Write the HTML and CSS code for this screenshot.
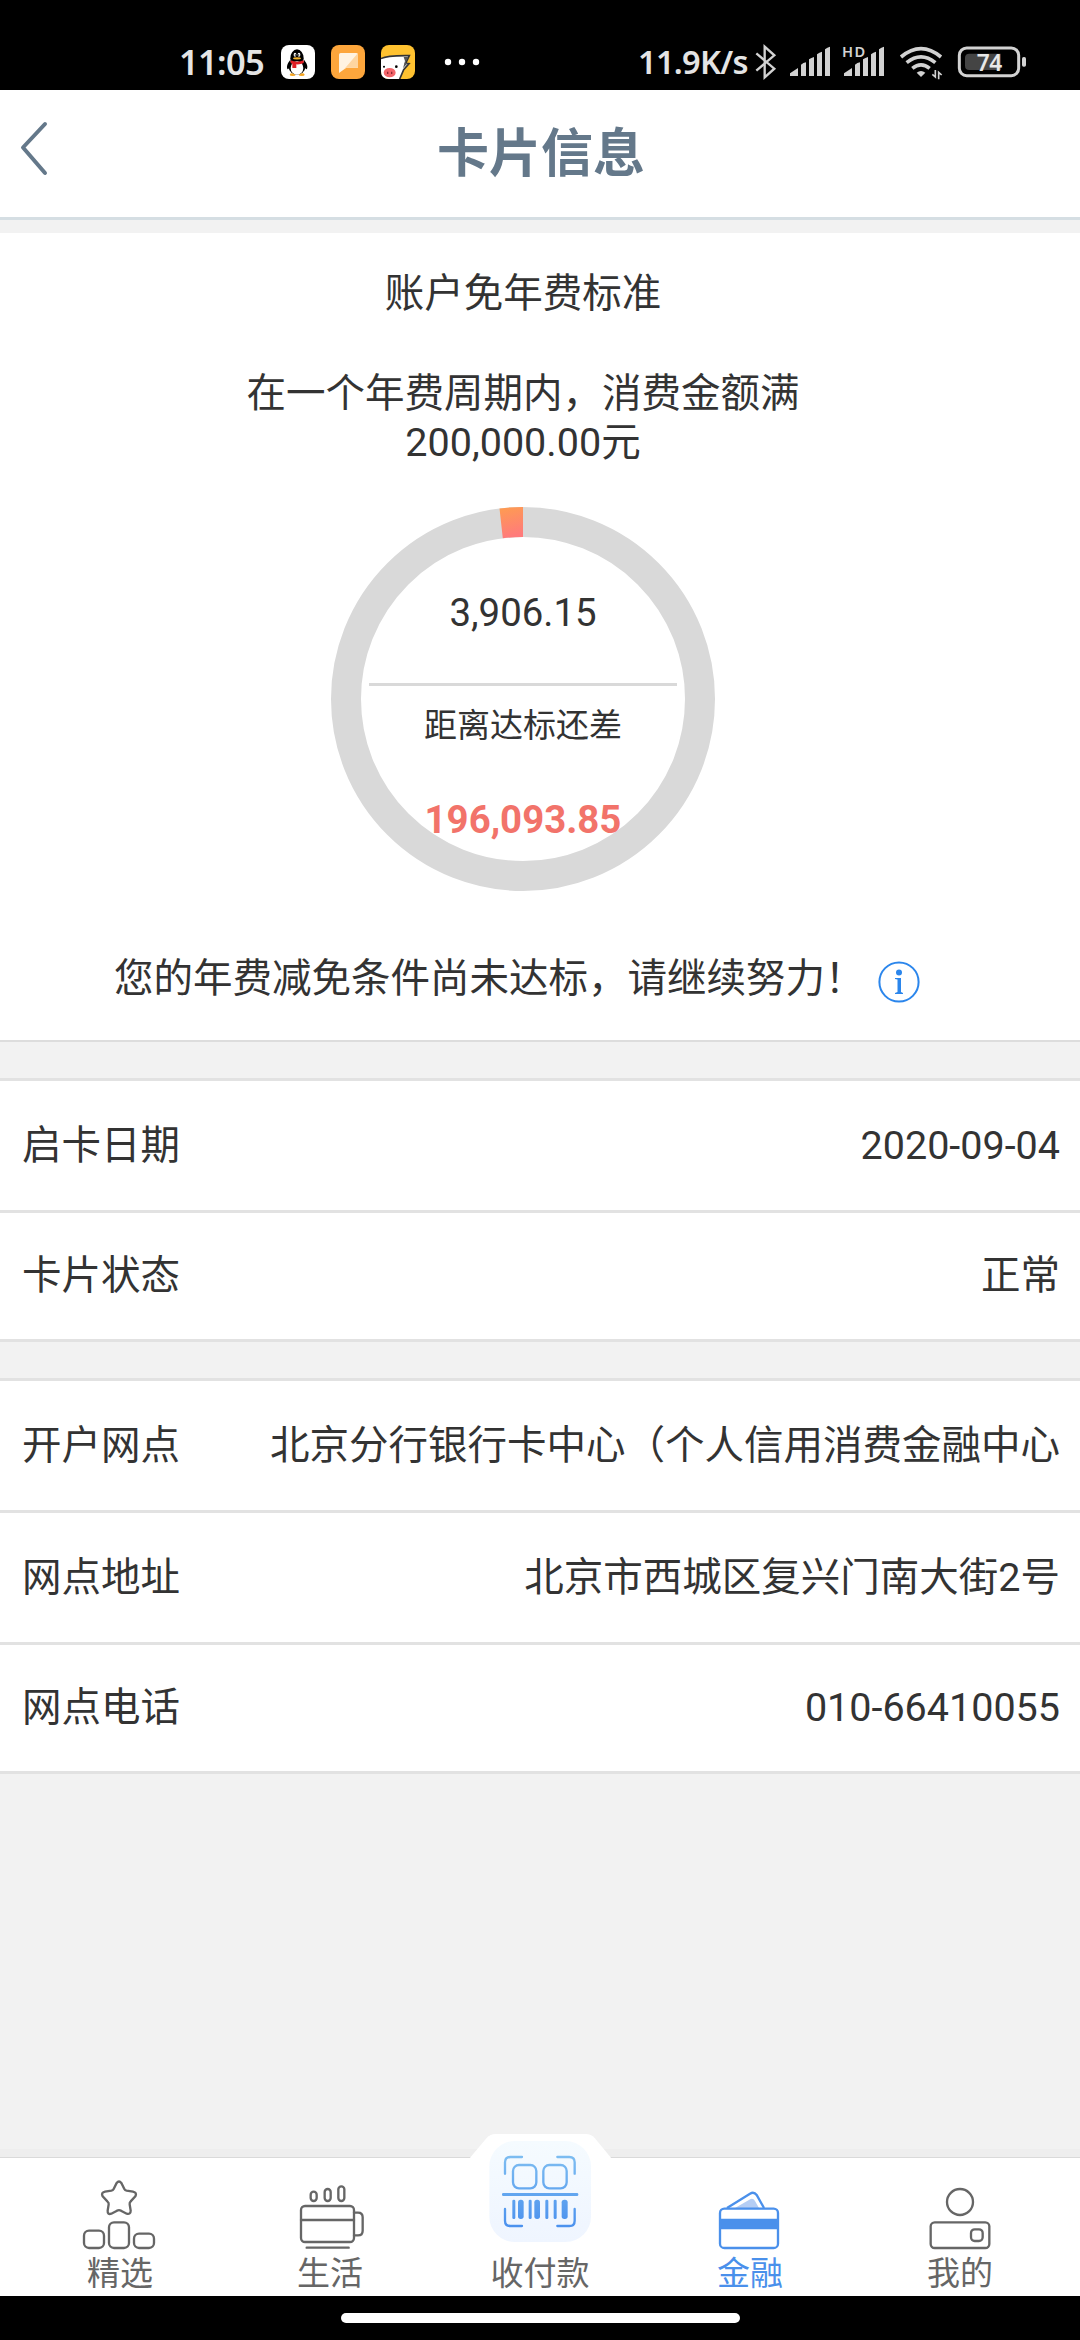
FILE: index.html
```html
<!DOCTYPE html>
<html lang="zh-CN">
<head>
<meta charset="utf-8">
<title>卡片信息</title>
<link rel="stylesheet" href="styles.css">
</head>
<body>
<div class="phone">
  <div class="status">
    <span class="clock">11:05</span>
    <div class="notices">
      <svg width="34" height="34" viewBox="0 0 102 102">
        <rect width="102" height="102" rx="24" fill="#fff"/>
        <ellipse cx="35" cy="89" rx="9" ry="4" fill="#f5a623"/><ellipse cx="62" cy="89" rx="9" ry="4" fill="#f5a623"/>
        <path d="M28 44Q14 62 19 72Q22 74 28 66ZM69 44Q83 62 78 72Q75 74 69 66Z" fill="#000"/>
        <ellipse cx="48" cy="65" rx="25" ry="24" fill="#000"/>
        <ellipse cx="48" cy="40" rx="20" ry="27" fill="#000"/>
        <ellipse cx="48" cy="69" rx="19" ry="20" fill="#fff"/>
        <ellipse cx="42" cy="29" rx="4" ry="6" fill="#fff"/><ellipse cx="54" cy="29" rx="4" ry="6" fill="#fff"/>
        <circle cx="43" cy="30" r="2"/><circle cx="53" cy="30" r="2"/>
        <ellipse cx="48" cy="40" rx="12" ry="3.5" fill="#f7b52c"/>
        <path d="M29 46Q48 54 68 46V54Q58 59 46 58V69H34V56L29 54Z" fill="#e01f26"/>
      </svg>
      <svg width="34" height="34" viewBox="0 0 102 102">
        <rect width="102" height="102" rx="24" fill="#fda63c"/>
        <path d="M29 24H76Q81 24 81 29V68H46L24 84V29Q24 24 29 24Z" fill="#fff3e2"/>
        <path d="M81 24V68H46L40 72Z" fill="#fed5a0"/>
      </svg>
      <svg width="34" height="34" viewBox="0 0 102 102">
        <rect width="102" height="102" rx="24" fill="#ffc230"/>
        <path d="M0 41Q16 29 85 32L75 56L84 55L70 72L56 102H24Q0 102 0 78Z" fill="#fff"/>
        <path d="M0 41Q16 31 85 32L74 55L84 56L68 74L56 102" fill="none" stroke="#333" stroke-width="5"/>
        <path d="M68 36H82L72 54H80L66 70L72 48Z" fill="#555"/>
        <ellipse cx="26" cy="83" rx="18" ry="14" fill="#f3656a"/>
        <path d="M20 80V87M32 80V87" stroke="#8a2931" stroke-width="4"/>
        <circle cx="9" cy="65" r="3"/><circle cx="46" cy="65" r="4"/>
      </svg>
    </div>
    <svg class="dots" width="36" height="8" viewBox="0 0 36 8" fill="#fff"><circle cx="4" cy="4" r="3.2"/><circle cx="18" cy="4" r="3.2"/><circle cx="32" cy="4" r="3.2"/></svg>
    <span class="speed">11.9K/s</span>
    <svg class="bt" width="25" height="40" viewBox="399 36 75 120"><path d="M409 70L463 116L434 142V50L463 76L409 122" fill="none" stroke="#d2d2d2" stroke-width="7"/></svg>
    <svg class="sig" width="43" height="40" viewBox="507 36 129 120" fill="#d2d2d2"><path d="M510 138V130L534 114V138ZM543 138V104Q550 98 558 97V138ZM567 138V88Q574 83 582 81V138ZM591 138V73Q598 67 606 65V138ZM615 138V58Q622 52 630 50V138Z"/></svg>
    <svg class="sig2" width="44" height="40" viewBox="666 36 132 120" fill="#d2d2d2"><path d="M672 138V130L696 114V138ZM705 138V104Q712 98 720 97V138ZM729 138V88Q736 83 744 81V138ZM753 138V73Q760 67 768 65V138ZM777 138V58Q784 52 792 50V138Z"/><text x="666" y="81" class="hd" textLength="70">HD</text></svg>
    <svg class="wifi" width="45" height="40" viewBox="837 36 135 120" fill="none" stroke="#d2d2d2" stroke-width="11"><path d="M843 81Q903 31 963 81M860 98Q903 63 946 98M877 115Q903 94 929 115"/><path d="M890 128Q903 118 916 128L903 141Z" fill="#d2d2d2" stroke="none"/><path d="M946 120V141L937 133M956 148V127L965 135" stroke-width="5"/></svg>
    <svg class="batt" width="70" height="40" viewBox="1011 36 210 120"><rect x="1018" y="54" width="178" height="83" rx="22" fill="none" stroke="#d2d2d2" stroke-width="9"/><path d="M1048 71H1142V120H1048Q1035 120 1035 107V84Q1035 71 1048 71Z" fill="#444"/><rect x="1206" y="81" width="12" height="29" rx="5" fill="#d2d2d2"/><text x="1070" y="122" class="pct" textLength="77">74</text></svg>
  </div>

  <header class="header">
    <svg class="back" width="34" height="56" viewBox="0 0 34 56"><path d="M28 4L6 27.500L28 53" fill="none" stroke="#64788a" stroke-width="4" stroke-linecap="round" stroke-linejoin="round"/></svg>
    <h1>卡片信息</h1>
  </header>

  <main>
    <section class="summary">
      <div class="fee-title">账户免年费标准</div>
      <div class="fee-rule">在一个年费周期内，消费金额满<br>200,000.00元</div>
      <div class="ring">
        <svg class="ring-art" width="384" height="384" viewBox="0 0 384 384">
          <defs><linearGradient id="g" x1="0" y1="0" x2=".2" y2="1"><stop offset="0" stop-color="#fe9d50"/><stop offset="1" stop-color="#ff7b7b"/></linearGradient></defs>
          <circle cx="192" cy="192" r="177" fill="none" stroke="#d9d9d9" stroke-width="30"/>
          <path d="M192 0A192 192 0 0 0 168.500 1.400L171.800 31.200A162 162 0 0 1 192 30Z" fill="url(#g)"/>
        </svg>
        <div class="ring-text">
          <div class="spent">3,906.15</div>
          <div class="gap-label">距离达标还差</div>
          <div class="gap-value">196,093.85</div>
        </div>
      </div>
      <div class="message">
        <span>您的年费减免条件尚未达标，请继续努力！</span>
        <svg width="42" height="42" viewBox="0 0 42 42"><circle cx="21" cy="21" r="19.600" fill="none" stroke="#2b86ec" stroke-width="2"/><circle cx="21" cy="11.500" r="3" fill="#2b86ec"/><path d="M17 17H23V31L25 32V33H17V32L19.500 31V18.500L17 18Z" fill="#2b86ec"/></svg>
      </div>
    </section>

    <section class="list">
      <div class="row"><span>启卡日期</span><span>2020-09-04</span></div>
      <div class="row"><span>卡片状态</span><span>正常</span></div>
    </section>
    <section class="list">
      <div class="row"><span>开户网点</span><span>北京分行银行卡中心（个人信用消费金融中心</span></div>
      <div class="row"><span>网点地址</span><span>北京市西城区复兴门南大街2号</span></div>
      <div class="row"><span>网点电话</span><span>010-66410055</span></div>
    </section>
  </main>

  <nav class="tabs">
    <div class="tab">
      <svg width="80" height="76" viewBox="240 165 240 228">
        <path d="M350 189Q357 180 364 189L373 207Q375 211 380 212L399 215Q412 218 406 229L392 244Q388 248 389 253L392 272Q392 284 380 281L363 272Q357 269 351 272L334 281Q322 285 323 272L326 253Q327 248 322 244L308 229Q302 218 315 215L334 212Q339 211 341 207Z"/>
        <rect x="252" y="332" width="60" height="52" rx="15"/><rect x="327" y="307" width="60" height="77" rx="15"/><rect x="402" y="341" width="60" height="43" rx="15"/>
      </svg>
      <span>精选</span>
    </div>
    <div class="tab">
      <svg width="80" height="76" viewBox="870 165 240 228">
        <rect x="932" y="215" width="18" height="28" rx="9"/><rect x="974" y="207" width="18" height="36" rx="9"/><rect x="1015" y="199" width="18" height="44" rx="9"/>
        <rect x="903" y="258" width="159" height="108" rx="12"/><path d="M903 300H1062M1062 278H1074Q1088 278 1088 292V332Q1088 346 1074 346H1062M920 383H1046" stroke-linecap="round"/>
      </svg>
      <span>生活</span>
    </div>
    <div class="tab pay">
      <svg class="scan" width="141" height="110" viewBox="120 72 423 330">
        <defs>
          <linearGradient id="s" gradientUnits="userSpaceOnUse" x1="0" y1="138" x2="0" y2="352"><stop offset="0" stop-color="#7dbdf1"/><stop offset="1" stop-color="#4b91ee"/></linearGradient>
          <linearGradient id="t" x1="0" y1="0" x2="0" y2="1"><stop offset="0" stop-color="#f5fbff"/><stop offset="1" stop-color="#eff5ff"/></linearGradient>
        </defs>
        <path d="M120 143L170 84Q181 72 196 72H468Q483 72 494 84L543 143V170H120Z" fill="#fff" stroke="none"/>
        <rect x="178" y="93" width="305" height="303" rx="76" fill="url(#t)" stroke="none"/>
        <g stroke="url(#s)" stroke-width="7" stroke-linecap="round">
          <path d="M225 191V157Q225 141 241 141H276M382 141H418Q434 141 434 157V191M225 297V332Q225 348 241 348H276M382 348H418Q434 348 434 332V297"/>
          <rect x="249" y="165" width="70" height="70" rx="18"/><rect x="340" y="165" width="70" height="70" rx="18"/>
        </g>
        <g fill="url(#s)" stroke="none"><rect x="216" y="249" width="229" height="9" rx="4"/><rect x="247" y="269" width="9" height="58" rx="4"/><rect x="264" y="269" width="17" height="58" rx="8"/><rect x="296" y="269" width="9" height="58" rx="4"/><rect x="313" y="269" width="17" height="58" rx="8"/><rect x="346" y="269" width="9" height="58" rx="4"/><rect x="371" y="269" width="9" height="58" rx="4"/><rect x="395" y="269" width="18" height="58" rx="8"/></g>
      </svg>
      <span>收付款</span>
    </div>
    <div class="tab active">
      <svg width="80" height="76" viewBox="90 165 240 228">
        <path d="M141 264L210 221Q222 214 230 225L252 264"/><path d="M165 264L212 237Q220 234 225 243L237 264Z" fill="#b4cdf4" stroke="none"/>
        <rect x="120" y="266" width="174" height="118" rx="13"/><path d="M120 296H294V328H120Z" fill="#4a90eb" stroke="none"/>
      </svg>
      <span>金融</span>
    </div>
    <div class="tab">
      <svg width="80" height="76" viewBox="720 165 240 228">
        <circle cx="840" cy="246" r="39"/><rect x="752" y="307" width="176" height="77" rx="12"/><rect x="873" y="328" width="35" height="35" rx="11"/>
      </svg>
      <span>我的</span>
    </div>
  </nav>
  <div class="homebar"><i></i></div>
</div>
</body>
</html>
```
FILE: styles.css
```css
* { box-sizing: border-box; }
body { margin: 0; background: #f2f2f2; color: #333; font-family: Roboto, "Noto Sans CJK SC", sans-serif; font-size: 39.5px; }
svg { display: block; flex: none; }
.phone { width: 1080px; height: 2340px; display: flex; flex-direction: column; overflow: hidden; }

.status { height: 90px; flex: none; padding: 34px 0 0 179px; background: #000; display: flex; align-items: center; color: #e4e4e4; font-family: "Noto Sans", sans-serif; font-weight: 600; white-space: nowrap; }
.clock { width: 102px; font-size: 34.500px; line-height: 40px; letter-spacing: -.7px; }
.notices { display: flex; gap: 16px; }
.dots { margin-left: 29px; }
.speed { width: 115px; margin-left: 158px; font-size: 32.500px; line-height: 40px; letter-spacing: -.7px; }
.sig { margin-left: 11px; }
.sig2 { margin-left: 10px; }
.wifi, .batt { margin-left: 13px; }
.hd { font: 600 44px "Noto Sans", sans-serif; }
.pct { font: 600 68px "Noto Sans", sans-serif; fill: #e8e8e8; }

.header { height: 130px; flex: none; background: #fff; border-bottom: 3px solid #d5dee3; display: grid; grid-template-columns: 61px 1fr 59px; }
.back { margin: 30px 0 0 17px; }
.header h1 { margin: 0; padding-top: 2px; align-self: center; text-align: center; font-size: 52px; line-height: 60px; font-weight: 700; color: #64788a; }

main { flex: 1; padding-top: 13px; }
.summary { height: 809px; padding: 37px 34px 0 0; background: #fff; border-bottom: 2px solid #ddd; text-align: center; }
.fee-title { line-height: 48px; }
.fee-rule { margin-top: 51px; line-height: 49px; }
.ring { width: 384px; margin: 40px auto 0; display: grid; }
.ring-art, .ring-text { grid-area: 1 / 1; }
.ring-text { padding: 81px 38px 0; }
.spent { height: 98px; line-height: 49px; font-size: 38.400px; border-bottom: 3px solid #d9d9d9; }
.gap-label { margin-top: 18px; font-size: 33px; line-height: 44px; }
.gap-value { margin-top: 48px; line-height: 48px; font-size: 38.400px; font-weight: 700; color: #f2736a; }
.message { margin-top: 64px; padding-left: 114px; display: flex; gap: 13px; line-height: 48px; white-space: nowrap; }
.message svg { margin-top: 6px; }

.list { margin-top: 36px; background: #fff; border-top: 3px solid #e2e2e2; }
.row { height: 132px; padding: 0 20px 0 22px; border-bottom: 3px solid #e2e2e2; display: flex; align-items: center; justify-content: space-between; line-height: 48px; white-space: nowrap; }
.row:last-child { height: 129px; }

.tabs { height: 139px; flex: none; padding: 0 15px; background: #fff; border-top: 1px solid #dadada; box-shadow: 0 -8px #eee; position: relative; display: grid; grid-template-columns: repeat(5, 210px); }
.tab { padding-top: 17px; display: flex; flex-direction: column; align-items: center; color: #666; font-size: 33px; }
.tab > svg { fill: none; stroke: #666; stroke-width: 7; }
.tab span { line-height: 40px; margin-top: 3px; }
.tab.active { color: #4a90eb; }
.tab.active > svg { stroke: #4a90eb; }
.pay { justify-content: flex-end; padding-bottom: 2px; }
.tab > .scan { position: absolute; left: 470px; top: -24px; stroke: none; }
.homebar { height: 44px; flex: none; background: #000; display: grid; place-items: center; }
.homebar i { width: 399px; height: 10px; border-radius: 5px; background: #fff; }
```
